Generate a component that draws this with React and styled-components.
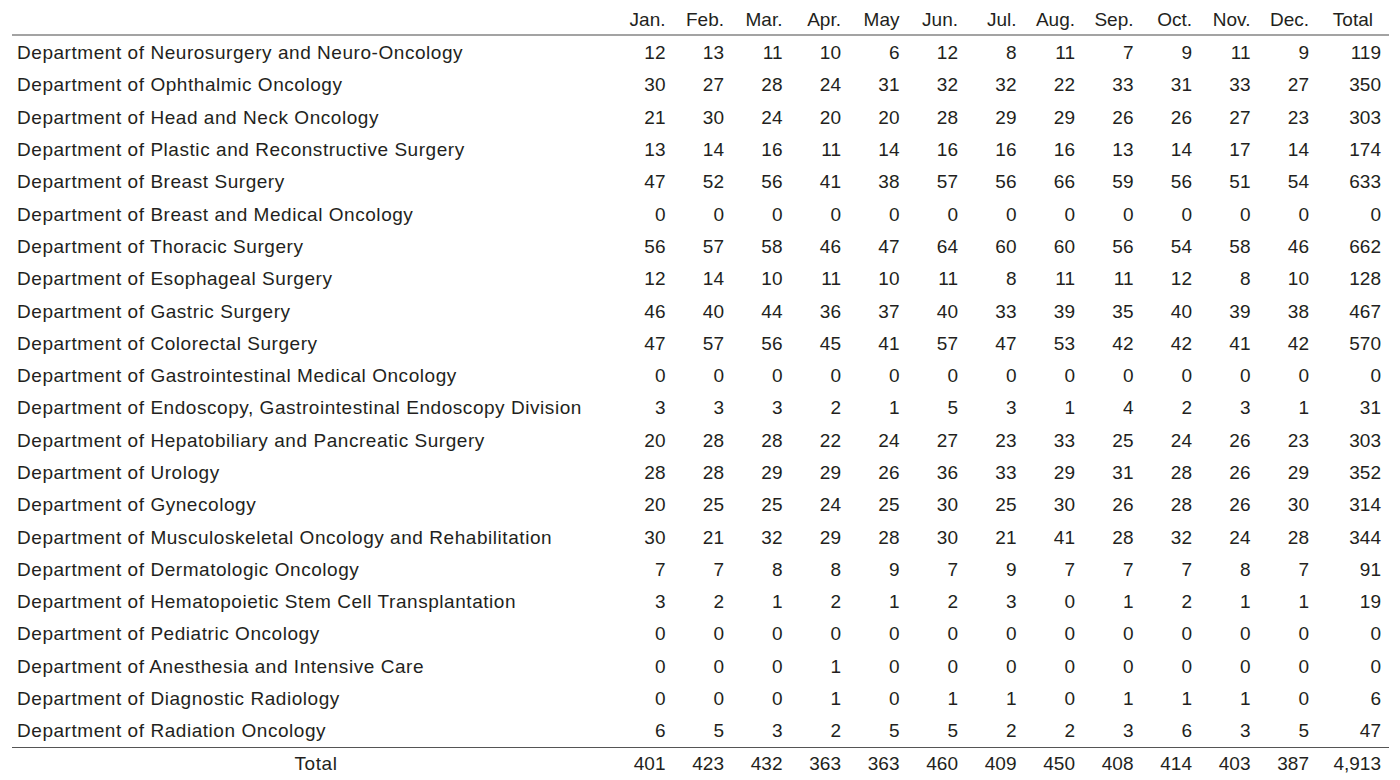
import React from 'react';
import styled, { createGlobalStyle } from 'styled-components';

const GlobalStyle = createGlobalStyle`
    body {
        margin: 0;
        background: #ffffff;
        font-family: "Liberation Sans", Arial, Helvetica, sans-serif;
        color: #231f20;
    }
`;

const months = ['Jan.', 'Feb.', 'Mar.', 'Apr.', 'May', 'Jun.', 'Jul.', 'Aug.', 'Sep.', 'Oct.', 'Nov.', 'Dec.'];

const zeros = [0, 0, 0, 0, 0, 0, 0, 0, 0, 0, 0, 0, 0];

const departments = [
    ['Neurosurgery and Neuro-Oncology', [12, 13, 11, 10, 6, 12, 8, 11, 7, 9, 11, 9, 119]],
    ['Ophthalmic Oncology', [30, 27, 28, 24, 31, 32, 32, 22, 33, 31, 33, 27, 350]],
    ['Head and Neck Oncology', [21, 30, 24, 20, 20, 28, 29, 29, 26, 26, 27, 23, 303]],
    ['Plastic and Reconstructive Surgery', [13, 14, 16, 11, 14, 16, 16, 16, 13, 14, 17, 14, 174]],
    ['Breast Surgery', [47, 52, 56, 41, 38, 57, 56, 66, 59, 56, 51, 54, 633]],
    ['Breast and Medical Oncology', zeros],
    ['Thoracic Surgery', [56, 57, 58, 46, 47, 64, 60, 60, 56, 54, 58, 46, 662]],
    ['Esophageal Surgery', [12, 14, 10, 11, 10, 11, 8, 11, 11, 12, 8, 10, 128]],
    ['Gastric Surgery', [46, 40, 44, 36, 37, 40, 33, 39, 35, 40, 39, 38, 467]],
    ['Colorectal Surgery', [47, 57, 56, 45, 41, 57, 47, 53, 42, 42, 41, 42, 570]],
    ['Gastrointestinal Medical Oncology', zeros],
    ['Endoscopy, Gastrointestinal Endoscopy Division', [3, 3, 3, 2, 1, 5, 3, 1, 4, 2, 3, 1, 31]],
    ['Hepatobiliary and Pancreatic Surgery', [20, 28, 28, 22, 24, 27, 23, 33, 25, 24, 26, 23, 303]],
    ['Urology', [28, 28, 29, 29, 26, 36, 33, 29, 31, 28, 26, 29, 352]],
    ['Gynecology', [20, 25, 25, 24, 25, 30, 25, 30, 26, 28, 26, 30, 314]],
    ['Musculoskeletal Oncology and Rehabilitation', [30, 21, 32, 29, 28, 30, 21, 41, 28, 32, 24, 28, 344]],
    ['Dermatologic Oncology', [7, 7, 8, 8, 9, 7, 9, 7, 7, 7, 8, 7, 91]],
    ['Hematopoietic Stem Cell Transplantation', [3, 2, 1, 2, 1, 2, 3, 0, 1, 2, 1, 1, 19]],
    ['Pediatric Oncology', zeros],
    ['Anesthesia and Intensive Care', [0, 0, 0, 1, 0, 0, 0, 0, 0, 0, 0, 0, 0]],
    ['Diagnostic Radiology', [0, 0, 0, 1, 0, 1, 1, 0, 1, 1, 1, 0, 6]],
    ['Radiation Oncology', [6, 5, 3, 2, 5, 5, 2, 2, 3, 6, 3, 5, 47]],
];

const totals = ['401', '423', '432', '363', '363', '460', '409', '450', '408', '414', '403', '387', '4,913'];

const Table = styled.div`
    margin-left: 12px;
    width: 1377px;
    font-size: 19px;
`;

const Row = styled.div`
    display: grid;
    grid-template-columns: 1fr repeat(12, 58.5px) 72px;
    align-items: center;
    box-sizing: border-box;
    padding-top: 2px;
    height: ${props => props.height}px;
`;

const HeaderRow = styled(Row)`
    align-items: end;
    padding-top: 0;
    padding-bottom: 3px;
    border-bottom: 2px solid #a3a3a3;
`;

const TotalRow = styled(Row)`
    padding-top: 0;
    border-top: 1px solid #555555;
`;

const NameCell = styled.div`
    padding-left: 5px;
    white-space: nowrap;
    letter-spacing: 0.55px;
    text-align: ${props => (props.center ? 'center' : 'left')};
`;

const NumberCell = styled.div`
    text-align: right;
    padding-right: ${props => (props.shift ? 16 : 8)}px;
    white-space: nowrap;
`;

export default function App() {
    return (
        <>
            <GlobalStyle />
            <Table>
                <HeaderRow height={36}>
                    <NameCell />
                    {months.map(month => (
                        <NumberCell key={month}>{month}</NumberCell>
                    ))}
                    <NumberCell shift>Total</NumberCell>
                </HeaderRow>
                {departments.map(([name, values]) => (
                    <Row key={name} height={32.3}>
                        <NameCell>Department of {name}</NameCell>
                        {values.map((value, index) => (
                            <NumberCell key={index}>{value}</NumberCell>
                        ))}
                    </Row>
                ))}
                <TotalRow height={33}>
                    <NameCell center>Total</NameCell>
                    {totals.map((value, index) => (
                        <NumberCell key={index}>{value}</NumberCell>
                    ))}
                </TotalRow>
            </Table>
        </>
    );
}
